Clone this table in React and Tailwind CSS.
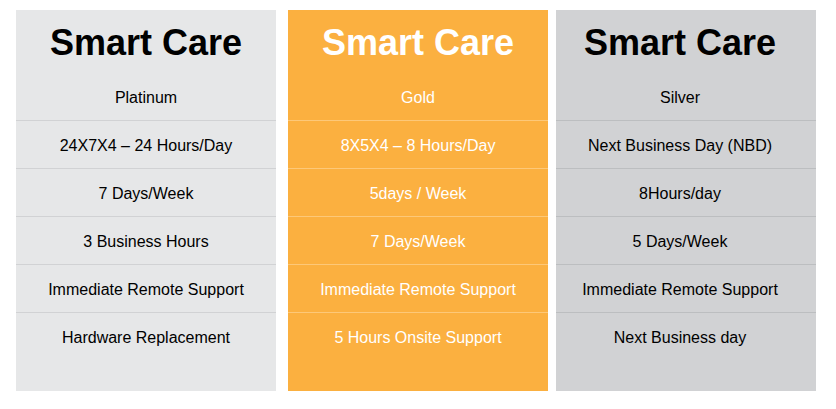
const plans = [
  {
    name: "Platinum",
    bg: "bg-[#e6e7e8]",
    line: "border-[#d1d2d4]",
    text: "text-black",
    box: "ml-0",
    rows: ["24X7X4 – 24 Hours/Day", "7 Days/Week", "3 Business Hours", "Immediate Remote Support", "Hardware Replacement"],
  },
  {
    name: "Gold",
    bg: "bg-[#fbb040]",
    line: "border-[#fdc878]",
    text: "text-white",
    box: "ml-[12px]",
    rows: ["8X5X4 – 8 Hours/Day", "5days / Week", "7 Days/Week", "Immediate Remote Support", "5 Hours Onsite Support"],
  },
  {
    name: "Silver",
    bg: "bg-[#d1d2d4]",
    line: "border-[#bcbec0]",
    text: "text-black",
    box: "ml-[8px] [&>*]:pr-[12px]",
    rows: ["Next Business Day (NBD)", "8Hours/day", "5 Days/Week", "Immediate Remote Support", "Next Business day"],
  },
];

function PlanColumn({ plan }) {
  return (
    <div className={`w-[260px] h-[381px] flex flex-col ${plan.box} ${plan.bg} ${plan.text}`}>
      <div className="h-[110px] flex flex-col items-center">
        <h2 className="mt-[15px] text-[36px] leading-[36px] font-bold">Smart Care</h2>
        <p className="mt-[28px] text-[16px] leading-[18px]">{plan.name}</p>
      </div>
      {plan.rows.map((row) => (
        <div key={row} className={`h-[48px] pt-[2px] border-t ${plan.line} flex items-center justify-center text-[16px]`}>
          {row}
        </div>
      ))}
    </div>
  );
}

export default function App() {
  return (
    <div className="w-[836px] h-[409px] bg-white pt-[10px] pl-[16px] flex font-['Liberation_Sans',Arial,sans-serif]">
      {plans.map((plan) => (
        <PlanColumn key={plan.name} plan={plan} />
      ))}
    </div>
  );
}
